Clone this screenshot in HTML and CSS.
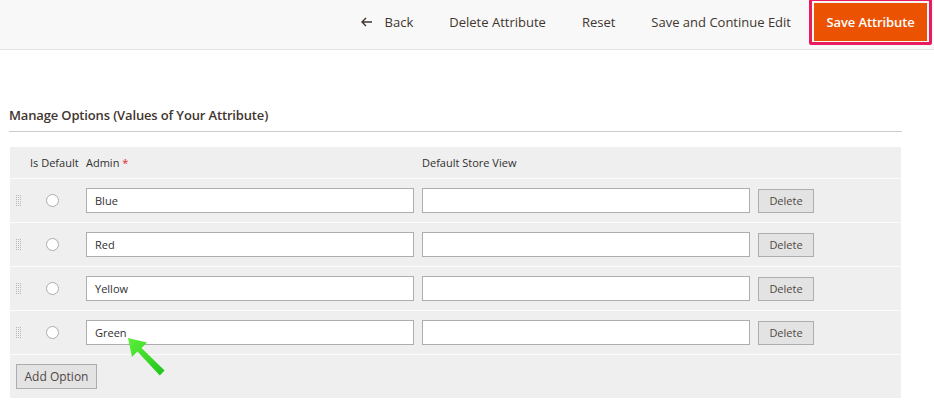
FILE: index.html
```html
<!DOCTYPE html>
<html>
<head>
<meta charset="utf-8">
<link rel="stylesheet" href="styles.css">
</head>
<body>
<header class="page-actions">
  <button class="action back"><svg class="back-icon" width="11" height="10" viewBox="0 0 11 10"><path d="M5 1 L1 5 L5 9 M1 5 H11" fill="none" stroke="#41362f" stroke-width="1.4"/></svg>Back</button>
  <button class="action">Delete Attribute</button>
  <button class="action">Reset</button>
  <button class="action">Save and Continue Edit</button>
  <div class="highlight"><button class="primary">Save Attribute</button></div>
</header>

<main class="content">
  <h2 class="section-title">Manage Options (Values of Your Attribute)</h2>
  <div class="options-table">
    <div class="row head">
      <div class="isdefault">Is Default</div>
      <div class="col-admin">Admin <span class="req">*</span></div>
      <div class="col-store">Default Store View</div>
    </div>
    <div class="row">
      <svg class="handle" width="6" height="12" viewBox="0 0 6 12"><path d="M0 0h1v1H0zM2 0h1v1H2zM4 0h1v1H4zM0 2h1v1H0zM2 2h1v1H2zM4 2h1v1H4zM0 4h1v1H0zM2 4h1v1H2zM4 4h1v1H4zM0 6h1v1H0zM2 6h1v1H2zM4 6h1v1H4zM0 8h1v1H0zM2 8h1v1H2zM4 8h1v1H4zM0 10h1v1H0zM2 10h1v1H2zM4 10h1v1H4z" fill="#b8b8b8"/></svg><span class="radio"></span>
      <div class="input">Blue</div><div class="input"></div>
      <button class="btn">Delete</button>
    </div>
    <div class="row">
      <svg class="handle" width="6" height="12" viewBox="0 0 6 12"><path d="M0 0h1v1H0zM2 0h1v1H2zM4 0h1v1H4zM0 2h1v1H0zM2 2h1v1H2zM4 2h1v1H4zM0 4h1v1H0zM2 4h1v1H2zM4 4h1v1H4zM0 6h1v1H0zM2 6h1v1H2zM4 6h1v1H4zM0 8h1v1H0zM2 8h1v1H2zM4 8h1v1H4zM0 10h1v1H0zM2 10h1v1H2zM4 10h1v1H4z" fill="#b8b8b8"/></svg><span class="radio"></span>
      <div class="input">Red</div><div class="input"></div>
      <button class="btn">Delete</button>
    </div>
    <div class="row">
      <svg class="handle" width="6" height="12" viewBox="0 0 6 12"><path d="M0 0h1v1H0zM2 0h1v1H2zM4 0h1v1H4zM0 2h1v1H0zM2 2h1v1H2zM4 2h1v1H4zM0 4h1v1H0zM2 4h1v1H2zM4 4h1v1H4zM0 6h1v1H0zM2 6h1v1H2zM4 6h1v1H4zM0 8h1v1H0zM2 8h1v1H2zM4 8h1v1H4zM0 10h1v1H0zM2 10h1v1H2zM4 10h1v1H4z" fill="#b8b8b8"/></svg><span class="radio"></span>
      <div class="input">Yellow</div><div class="input"></div>
      <button class="btn">Delete</button>
    </div>
    <div class="row">
      <svg class="handle" width="6" height="12" viewBox="0 0 6 12"><path d="M0 0h1v1H0zM2 0h1v1H2zM4 0h1v1H4zM0 2h1v1H0zM2 2h1v1H2zM4 2h1v1H4zM0 4h1v1H0zM2 4h1v1H2zM4 4h1v1H4zM0 6h1v1H0zM2 6h1v1H2zM4 6h1v1H4zM0 8h1v1H0zM2 8h1v1H2zM4 8h1v1H4zM0 10h1v1H0zM2 10h1v1H2zM4 10h1v1H4z" fill="#b8b8b8"/></svg><span class="radio"></span>
      <div class="input">Green</div><div class="input"></div>
      <button class="btn">Delete</button>
    </div>
    <div class="foot">
      <button class="btn add">Add Option</button>
    </div>
  </div>
</main>

<svg class="annotation-arrow" width="50" height="50" viewBox="0 0 50 50">
  <defs>
    <linearGradient id="g" x1="0" y1="0" x2="1" y2="1">
      <stop offset="0" stop-color="#5cf03a"/>
      <stop offset="1" stop-color="#1fc41a"/>
    </linearGradient>
  </defs>
  <polygon points="8,8 27,12.5 21.5,18 44.6,40.5 39.8,45.5 17.4,21.6 12,27" fill="url(#g)"/>
</svg>
</body>
</html>
```

FILE: styles.css
```css
* { box-sizing: border-box; }
body {
  margin: 0;
  background: #fff;
  font-family: "Open Sans", "Liberation Sans", sans-serif;
  color: #303030;
  position: relative;
  width: 934px;
  height: 408px;
  overflow: hidden;
}
.page-actions {
  height: 50px;
  background: #f8f8f8;
  border-bottom: 1px solid #e3e3e3;
  display: flex;
  justify-content: flex-end;
  align-items: flex-start;
  padding-right: 2px;
}
.action {
  background: none;
  border: 0;
  font-family: inherit;
  font-size: 13px;
  color: #41362f;
  height: 43px;
  padding: 0 18px;
  display: flex;
  align-items: center;
}
.back-icon { margin-right: 13px; }
.highlight {
  margin-top: -2px;
  border: 3px solid #ea1c5f;
  border-radius: 2px;
  padding: 2px;
  height: 47px;
}
.primary {
  background: #eb5202;
  border: 1px solid #eb5202;
  color: #fff;
  font-family: inherit;
  font-weight: 600;
  font-size: 13px;
  letter-spacing: -0.1px;
  height: 38px;
  width: 113px;
  padding: 0;
}
.content { padding: 0 32px 0 9px; }
.section-title {
  margin: 56px 0 0;
  font-size: 13px;
  font-weight: 600;
  letter-spacing: -0.15px;
  color: #41362f;
  padding-bottom: 7px;
  border-bottom: 1px solid #cccccc;
  width: 893px;
}
.options-table {
  margin-top: 15px;
  margin-left: 1px;
  width: 891px;
  background: #efefef;
  font-size: 11px;
}
.row {
  display: flex;
  align-items: center;
  height: 44px;
  border-top: 1px solid #fbfbfb;
}
.row.head { height: 31px; border-top: 0; }
.isdefault { width: 76px; padding-left: 20px; }
.col-admin { width: 336px; }
.req { color: #e22626; }
.handle {
  flex: none;
  margin-left: 6px;
  margin-right: 24px;
}
.radio {
  flex: none;
  width: 13px;
  height: 13px;
  border: 1px solid #adadad;
  border-radius: 50%;
  background: #fff;
  margin-right: 27px;
}
.input {
  flex: none;
  width: 328px;
  height: 25px;
  background: #fff;
  border: 1px solid #adadad;
  padding-left: 8px;
  line-height: 23px;
  margin-right: 8px;
  color: #303030;
}
.btn {
  font-family: inherit;
  font-size: 11px;
  color: #514943;
  background: #e3e3e3;
  border: 1px solid #adadad;
  height: 24px;
  width: 56px;
  padding: 0;
}
.foot { height: 44px; border-top: 1px solid #fbfbfb; padding: 9px 0 0 6px; }
.btn.add { width: 81px; height: 25px; font-size: 12px; }
.annotation-arrow {
  position: absolute;
  left: 120px;
  top: 330px;
}
```
